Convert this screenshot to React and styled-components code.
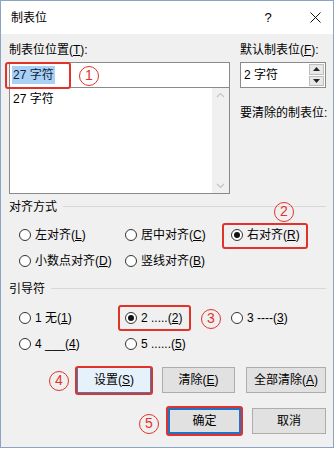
import styled, { createGlobalStyle, css } from "styled-components";

const Global = createGlobalStyle`
  html, body { margin: 0; padding: 0; background: #fff; }
  body { font-family: "Liberation Sans", "Noto Sans CJK SC", sans-serif; color: #000; }
`;

const RED = "#e2332b";

const Win = styled.div`
  position: relative;
  width: 334px;
  height: 448px;
  box-sizing: border-box;
  border: 1px solid #8aa4c4;
  background: #f0f0f0;
  font-size: 12px;
  line-height: 16px;
`;

const TitleBar = styled.div`
  height: 33px;
  background: #fff;
  display: flex;
  align-items: center;
  padding: 0 12px 0 10px;
`;

const TitleText = styled.div`
  flex: 1;
  font-size: 12px;
`;

const Help = styled.div`
  width: 14px;
  text-align: center;
  font-size: 13px;
  margin-right: 35px;
`;

const Body = styled.div`
  padding: 8px 7px 0 8px;
`;

const Top = styled.div`
  display: grid;
  grid-template-columns: 221px 86px;
  column-gap: 10px;
`;

const Label = styled.div`
  height: 16px;
  margin-bottom: 4px;
  white-space: nowrap;
`;

const U = styled.span`
  text-decoration: underline;
`;

const Field = styled.div`
  height: 26px;
  box-sizing: border-box;
  border: 1px solid #8a8a8a;
  background: #fff;
  display: flex;
  align-items: center;
  padding-left: 2px;
  position: relative;
`;

const Sel = styled.span`
  background: #a9d1f5;
  color: #10233a;
  padding: 1px 1px;
`;

const List = styled.div`
  height: 106px;
  box-sizing: border-box;
  border: 1px solid #8a8a8a;
  border-top: none;
  background: #fff;
  display: flex;
`;

const ListItems = styled.div`
  flex: 1;
  padding: 3px 3px;
`;

const ScrollBar = styled.div`
  width: 17px;
  background: #f0f0f0;
  display: flex;
  flex-direction: column;
  justify-content: space-between;
  align-items: center;
  padding: 4px 0;
  color: #c4c4c4;
`;

const Spin = styled.div`
  height: 26px;
  box-sizing: border-box;
  border: 1px solid #8a8a8a;
  background: #fff;
  display: flex;
  align-items: center;
  padding-left: 3px;
`;

const SpinText = styled.div`
  flex: 1;
`;

const SpinBtns = styled.div`
  width: 15px;
  height: 22px;
  margin-right: 1px;
  display: flex;
  flex-direction: column;
  gap: 1px;
`;

const SpinBtn = styled.div`
  flex: 1;
  background: #e8e8e8;
  border: 1px solid #bdbdbd;
  display: flex;
  align-items: center;
  justify-content: center;
`;

const ClearLabel = styled.div`
  margin-top: 17px;
  white-space: nowrap;
`;

const Group = styled.div`
  margin-top: ${(p) => p.$top}px;
`;

const GroupHead = styled.div`
  display: flex;
  align-items: center;
  height: 16px;
  &::after {
    content: "";
    flex: 1;
    border-top: 1px solid #d8d8d8;
    margin-left: 6px;
    margin-top: -2px;
  }
`;

const Options = styled.div`
  margin-top: ${(p) => p.$top}px;
  padding-left: 10px;
  display: grid;
  grid-template-columns: 106px 106px 96px;
  grid-auto-rows: 26px;
`;

const markStyle = css`
  position: relative;
  &::after {
    content: "";
    position: absolute;
    border: 2.5px solid ${RED};
    border-radius: 3px;
    ${(p) => p.$mark}
  }
`;

const Opt = styled.label`
  display: inline-flex;
  align-items: center;
  justify-self: start;
  gap: 4px;
  white-space: nowrap;
  ${(p) => p.$mark && markStyle}
`;

const Radio = styled.span`
  width: 12px;
  height: 12px;
  box-sizing: border-box;
  border: 1px solid #333;
  border-radius: 50%;
  background: #fff;
  display: flex;
  align-items: center;
  justify-content: center;
  &::before {
    content: "";
    width: 6px;
    height: 6px;
    border-radius: 50%;
    background: ${(p) => (p.$on ? "#111" : "transparent")};
  }
`;

const BtnRow = styled.div`
  display: flex;
  justify-content: flex-end;
  gap: 11px;
  margin-top: ${(p) => p.$top}px;
`;

const Btn = styled.div`
  width: ${(p) => p.$w}px;
  height: 26px;
  box-sizing: border-box;
  border: ${(p) =>
    p.$focus ? "2px solid #1f73c8" : p.$light ? "1px solid #3d7fb8" : "1px solid #adadad"};
  background: ${(p) => (p.$light ? "#e5f1fb" : "#e1e1e1")};
  display: flex;
  align-items: center;
  justify-content: center;
  white-space: nowrap;
  ${(p) => p.$mark && markStyle}
`;

const Num = styled.span`
  position: absolute;
  left: ${(p) => p.$x - 10}px;
  top: ${(p) => p.$y - 10}px;
  width: 20px;
  height: 20px;
  box-sizing: border-box;
  border: 1.5px solid ${RED};
  border-radius: 50%;
  color: ${RED};
  font-family: "Liberation Sans", sans-serif;
  font-size: 14px;
  line-height: 17px;
  text-align: center;
`;

const FieldMark = styled.div`
  position: absolute;
  left: -5px;
  top: -1px;
  width: 66px;
  height: 27px;
  box-sizing: border-box;
  border: 2.5px solid ${RED};
  border-radius: 3px;
`;

const Chevron = ({ up }) => (
  <svg width="9" height="6" viewBox="0 0 9 6">
    <path
      d={up ? "M1 5 L4.5 1.5 L8 5" : "M1 1 L4.5 4.5 L8 1"}
      fill="none"
      stroke="currentColor"
      strokeWidth="1.2"
    />
  </svg>
);

const Tri = ({ up }) => (
  <svg width="7" height="4" viewBox="0 0 7 4">
    <path d={up ? "M0 4 L3.5 0 L7 4 Z" : "M0 0 L3.5 4 L7 0 Z"} fill="#222" />
  </svg>
);

const Close = () => (
  <svg width="11" height="11" viewBox="0 0 11 11">
    <path d="M0.5 0.5 L10.5 10.5 M10.5 0.5 L0.5 10.5" stroke="#111" strokeWidth="1" />
  </svg>
);

const align = [
  ["左对齐(", "L", ")"],
  ["居中对齐(", "C", ")"],
  ["右对齐(", "R", ")"],
  ["小数点对齐(", "D", ")"],
  ["竖线对齐(", "B", ")"],
];

const leaders = [
  ["1 无(", "1", ")"],
  ["2 .....(", "2", ")"],
  ["3 ----(", "3", ")"],
  ["4 ___(", "4", ")"],
  ["5 ......(", "5", ")"],
];

export default function App() {
  return (
    <>
      <Global />
      <Win>
        <TitleBar>
          <TitleText>制表位</TitleText>
          <Help>?</Help>
          <Close />
        </TitleBar>
        <Body>
          <Top>
            <div>
              <Label>
                制表位位置(<U>T</U>):
              </Label>
              <Field>
                <Sel>27 字符</Sel>
                <FieldMark />
              </Field>
              <List>
                <ListItems>27 字符</ListItems>
                <ScrollBar>
                  <Chevron up />
                  <Chevron />
                </ScrollBar>
              </List>
            </div>
            <div>
              <Label>
                默认制表位(<U>F</U>):
              </Label>
              <Spin>
                <SpinText>2 字符</SpinText>
                <SpinBtns>
                  <SpinBtn>
                    <Tri up />
                  </SpinBtn>
                  <SpinBtn>
                    <Tri />
                  </SpinBtn>
                </SpinBtns>
              </Spin>
              <ClearLabel>要清除的制表位:</ClearLabel>
            </div>
          </Top>

          <Group $top={5}>
            <GroupHead>对齐方式</GroupHead>
            <Options $top={7}>
              {align.map((a, i) => (
                <Opt
                  key={a[0]}
                  $mark={i === 2 ? "left:-9px;right:-8px;top:1px;bottom:-1px;" : null}
                >
                  <Radio $on={i === 2} />
                  <span>
                    {a[0]}
                    <U>{a[1]}</U>
                    {a[2]}
                  </span>
                </Opt>
              ))}
            </Options>
          </Group>

          <Group $top={7}>
            <GroupHead>引导符</GroupHead>
            <Options $top={8}>
              {leaders.map((a, i) => (
                <Opt
                  key={a[0]}
                  $mark={i === 1 ? "left:-7px;right:-9px;top:0px;bottom:0px;" : null}
                >
                  <Radio $on={i === 1} />
                  <span>
                    {a[0]}
                    <U>{a[1]}</U>
                    {a[2]}
                  </span>
                </Opt>
              ))}
            </Options>
          </Group>

          <BtnRow $top={10}>
            <Btn $w={74} $light $mark="left:-3px;right:-3px;top:-2px;bottom:-3px;">
              设置(<U>S</U>)
            </Btn>
            <Btn $w={73}>
              清除(<U>E</U>)
            </Btn>
            <Btn $w={80}>
              全部清除(<U>A</U>)
            </Btn>
          </BtnRow>

          <BtnRow $top={15}>
            <Btn $w={73} $focus $mark="left:-4px;right:-4px;top:-4px;bottom:-4px;">
              确定
            </Btn>
            <Btn $w={74}>取消</Btn>
          </BtnRow>
        </Body>

        <Num $x={88} $y={75}>1</Num>
        <Num $x={283} $y={211}>2</Num>
        <Num $x={210} $y={318}>3</Num>
        <Num $x={58} $y={380}>4</Num>
        <Num $x={148} $y={423}>5</Num>
      </Win>
    </>
  );
}
